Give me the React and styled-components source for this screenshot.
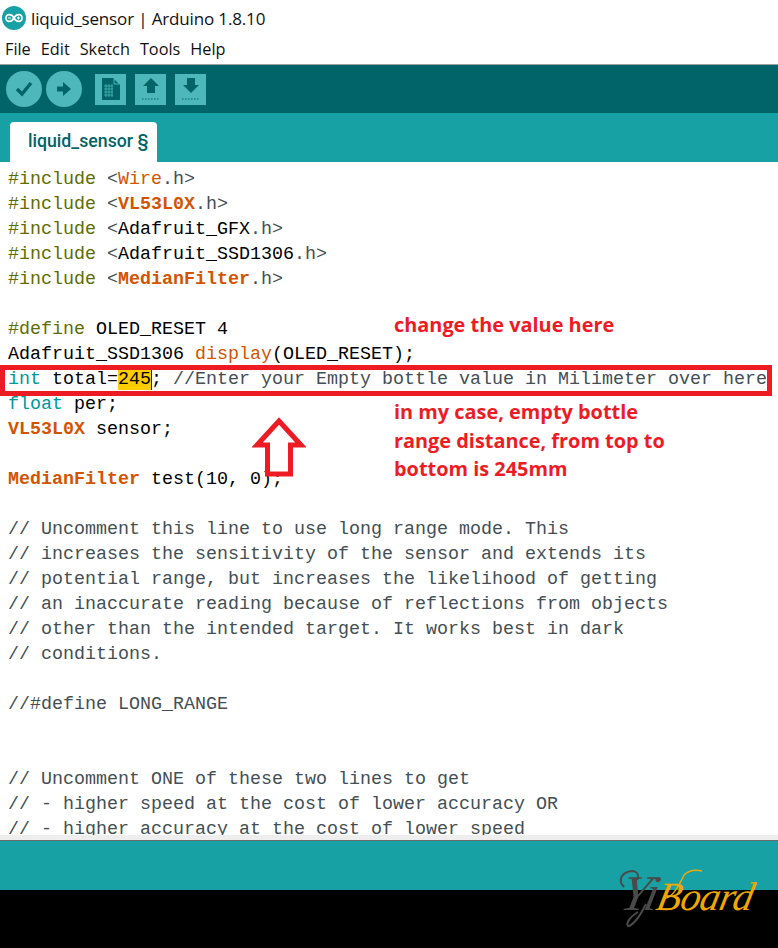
import React from 'react';
import styled, { createGlobalStyle } from 'styled-components';

const GlobalStyle = createGlobalStyle`
  html, body {
    margin: 0;
    padding: 0;
    background: #000;
  }
`;

const Page = styled.div`
  position: relative;
  width: 778px;
  height: 948px;
  display: flex;
  flex-direction: column;
  overflow: hidden;
  background: #fff;
`;

const TitleBar = styled.div`
  height: 36px;
  display: flex;
  align-items: center;
  gap: 5px;
  padding-left: 2px;
  font-family: "Open Sans", sans-serif;
  font-size: 17px;
  letter-spacing: -0.15px;
  color: #111;
`;

const MenuBar = styled.div`
  height: 26px;
  padding-bottom: 2px;
  display: flex;
  align-items: center;
  gap: 10px;
  padding-left: 5px;
  border-bottom: 1px solid #a0a0a0;
  font-family: "Open Sans", sans-serif;
  font-size: 16.300px;
  color: #111;
`;

const Toolbar = styled.div`
  height: 48px;
  display: flex;
  align-items: center;
  padding-left: 6px;
  background: #006468;
`;

const RoundButton = styled.div`
  width: 36px;
  height: 36px;
  margin-right: 4px;
  border-radius: 50%;
  background: #4db7bb;
  display: flex;
  align-items: center;
  justify-content: center;
`;

const SquareButton = styled.div`
  width: 31px;
  height: 31px;
  margin-left: 9px;
  background: #4db7bb;
  display: flex;
  align-items: center;
  justify-content: center;
`;

const TabBar = styled.div`
  height: 49px;
  display: flex;
  align-items: flex-end;
  padding-left: 10px;
  background: #17a1a5;
`;

const Tab = styled.div`
  width: 147px;
  height: 40px;
  box-sizing: border-box;
  padding: 0 0 2px 18px;
  display: flex;
  align-items: center;
  background: #fff;
  border-radius: 4px 4px 0 0;
  font-family: Roboto, sans-serif;
  font-weight: 500;
  font-size: 17.700px;
  color: #006468;
`;

const Editor = styled.div`
  position: relative;
  height: 673px;
  overflow: hidden;
  padding: 5px 0 0 8px;
  box-sizing: border-box;
  background: #fff;
`;

const CodeLine = styled.div`
  height: 25px;
  line-height: 25px;
  font-family: "Liberation Mono", monospace;
  font-size: 18.33px;
  white-space: pre;
  color: #000;
`;

const Pre = styled.span`
  color: #5e6d03;
`;

const Gray = styled.span`
  color: #434f54;
`;

const Lib = styled.span`
  color: #d35400;
  font-weight: ${({ $bold }) => ($bold ? 700 : 400)};
`;

const Type = styled.span`
  color: #00979c;
`;

const Selected = styled.span`
  background: #ffcc00;
  box-shadow: 1px 0 0 #222;
`;

const RedBox = styled.div`
  position: absolute;
  left: 0;
  top: 203px;
  width: 772px;
  height: 31px;
  box-sizing: border-box;
  border: 5px solid #ed1c24;
`;

const Note = styled.div`
  position: absolute;
  left: 394px;
  top: ${({ $top }) => $top}px;
  font-family: "Open Sans", sans-serif;
  font-weight: 700;
  font-size: 19.900px;
  line-height: 28.5px;
  color: #ed1c24;
  white-space: pre;
`;

const Arrow = styled.svg`
  position: absolute;
  left: 252px;
  top: 254px;
`;

const Strip = styled.div`
  height: 5px;
  background: #eeeeee;
  border-bottom: 1px solid #6b6b6b;
`;

const StatusBar = styled.div`
  height: 49px;
  background: #17a1a5;
`;

const Console = styled.div`
  flex: 1;
  background: #000;
`;

const Watermark = styled.div`
  position: absolute;
  left: 616px;
  top: 868px;
  width: 150px;
  height: 62px;
`;

const WatermarkText = styled.div`
  display: flex;
  align-items: baseline;
  padding-left: 6px;
  font-family: "Liberation Serif", serif;
  font-style: italic;
  transform: skewX(-12deg);
`;

const WatermarkYi = styled.span`
  font-size: 50px;
  line-height: 50px;
  letter-spacing: -1px;
  color: #4a4a4a;
`;

const WatermarkBoard = styled.span`
  font-size: 40px;
  line-height: 50px;
  letter-spacing: -0.6px;
  color: #f0a800;
`;

const WatermarkSwash = styled.svg`
  position: absolute;
  left: 0;
  top: 0;
`;

const keywordLine = (name, bold) => (
  <CodeLine>
    <Pre>#include</Pre> <Gray>&lt;</Gray>
    {bold === undefined ? name : <Lib $bold={bold}>{name}</Lib>}
    <Gray>.h&gt;</Gray>
  </CodeLine>
);

const comments = [
  '// Uncomment this line to use long range mode. This',
  '// increases the sensitivity of the sensor and extends its',
  '// potential range, but increases the likelihood of getting',
  '// an inaccurate reading because of reflections from objects',
  '// other than the intended target. It works best in dark',
  '// conditions.',
  '',
  '//#define LONG_RANGE',
  '',
  '',
  '// Uncomment ONE of these two lines to get',
  '// - higher speed at the cost of lower accuracy OR',
  '// - higher accuracy at the cost of lower speed',
];

function ArduinoLogo() {
  return (
    <svg width="24" height="24" viewBox="0 0 24 24">
      <circle cx="12" cy="12" r="12" fill="#17a1a5" />
      <path
        d="M4 12c0-5 6-4 8 0c2 4 8 5 8 0s-6-4-8 0c-2 4-8 5-8 0z"
        fill="none"
        stroke="#fff"
        strokeWidth="1.7"
      />
      <path d="M6 12h3M15 12h3M16.5 10.500v3" stroke="#fff" strokeWidth="1" />
    </svg>
  );
}

export default function App() {
  return (
    <Page>
      <GlobalStyle />
      <TitleBar>
        <ArduinoLogo />
        <span>liquid_sensor | Arduino 1.8.10</span>
      </TitleBar>
      <MenuBar>
        <span>File</span>
        <span>Edit</span>
        <span>Sketch</span>
        <span>Tools</span>
        <span>Help</span>
      </MenuBar>
      <Toolbar>
        <RoundButton>
          <svg width="18" height="16" viewBox="0 0 18 16">
            <path d="M2 8l5 5 9-11" fill="none" stroke="#006468" strokeWidth="3.4" />
          </svg>
        </RoundButton>
        <RoundButton>
          <svg width="16" height="16" viewBox="0 0 16 16">
            <path d="M1 5.500h6V1l8 7-8 7v-4.500H1z" fill="#006468" />
          </svg>
        </RoundButton>
        <SquareButton>
          <svg width="18" height="22" viewBox="0 0 18 22">
            <path d="M0 0h11l7 7v15H0z" fill="#006468" />
            <path
              d="M2 8h9M2 11h9M2 14h9M2 17h9M4 6v13M7 6v13M10 6v13"
              stroke="#4db7bb"
              strokeWidth="0.8"
            />
            <path d="M12 1v5h5" fill="none" stroke="#4db7bb" strokeWidth="1" />
          </svg>
        </SquareButton>
        <SquareButton>
          <svg width="18" height="24" viewBox="0 0 18 24">
            <path d="M9 1l8 8h-4v7H5V9H1z" fill="#006468" />
            <path d="M0 22h18" stroke="#006468" strokeWidth="1.200" strokeDasharray="1.500 1.500" />
          </svg>
        </SquareButton>
        <SquareButton>
          <svg width="18" height="24" viewBox="0 0 18 24">
            <path d="M5 1h8v7h4l-8 8-8-8h4z" fill="#006468" />
            <path d="M0 22h18" stroke="#006468" strokeWidth="1.200" strokeDasharray="1.500 1.500" />
          </svg>
        </SquareButton>
      </Toolbar>
      <TabBar>
        <Tab>liquid_sensor §</Tab>
      </TabBar>
      <Editor>
        {keywordLine('Wire', false)}
        {keywordLine('VL53L0X', true)}
        {keywordLine('Adafruit_GFX')}
        {keywordLine('Adafruit_SSD1306')}
        {keywordLine('MedianFilter', true)}
        <CodeLine />
        <CodeLine>
          <Pre>#define</Pre> OLED_RESET 4
        </CodeLine>
        <CodeLine>
          Adafruit_SSD1306 <Lib>display</Lib>(OLED_RESET);
        </CodeLine>
        <CodeLine>
          <Type>int</Type> total=<Selected>245</Selected>;{' '}
          <Gray>//Enter your Empty bottle value in Milimeter over here</Gray>
        </CodeLine>
        <CodeLine>
          <Type>float</Type> per;
        </CodeLine>
        <CodeLine>
          <Lib $bold>VL53L0X</Lib> sensor;
        </CodeLine>
        <CodeLine />
        <CodeLine>
          <Lib $bold>MedianFilter</Lib> test(10, 0);
        </CodeLine>
        <CodeLine />
        {comments.map((text, i) => (
          <CodeLine key={i}>
            <Gray>{text}</Gray>
          </CodeLine>
        ))}
        <RedBox />
        <Note $top={149}>change the value here</Note>
        <Note $top={236}>{'in my case, empty bottle\nrange distance, from top to\nbottom is 245mm'}</Note>
        <Arrow width="54" height="64" viewBox="0 0 54 64">
          <path
            d="M27 5L49 29H38.500V58H15.500V29H5z"
            fill="none"
            stroke="#ed1c24"
            strokeWidth="5"
          />
        </Arrow>
      </Editor>
      <Strip />
      <StatusBar />
      <Console />
      <Watermark>
        <WatermarkText>
          <WatermarkYi>Yi</WatermarkYi>
          <WatermarkBoard>Board</WatermarkBoard>
        </WatermarkText>
        <WatermarkSwash width="150" height="62" viewBox="0 0 150 62">
          <path
            d="M8 19C1 12 6 4 16 3C24 3 24 14 17 12"
            fill="none"
            stroke="#4a4a4a"
            strokeWidth="2"
          />
          <path d="M30 36C25 46 18 56 13 58C9 58 12 50 22 44" fill="none" stroke="#4a4a4a" strokeWidth="2" />
          <path d="M47 30C54 32 62 20 68 7C74 1 82 2 86 3" fill="none" stroke="#f0a800" strokeWidth="1.500" />
        </WatermarkSwash>
      </Watermark>
    </Page>
  );
}
